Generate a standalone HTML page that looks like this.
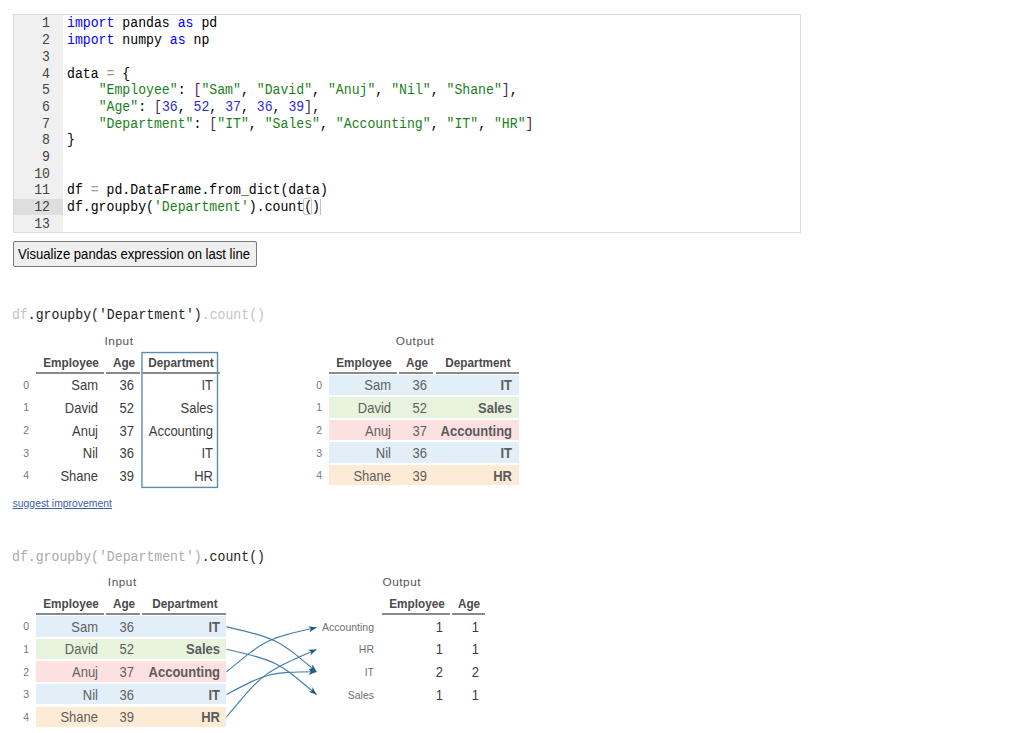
<!DOCTYPE html>
<html><head><meta charset="utf-8"><title>Pandas Tutor</title>
<style>html,body{margin:0;padding:0;background:#fff}body{position:relative;width:1028px;height:733px;overflow:hidden}</style>
</head><body>
<div style="position:absolute;left:13.00px;top:14.00px;width:788.00px;height:219.00px;box-sizing:border-box;border:1px solid #dcdcdc;background:#fff"></div>
<div style="position:absolute;left:14.00px;top:15.00px;width:49.00px;height:217.00px;background:#f0f0f0"></div>
<div style="position:absolute;left:14.00px;top:198.70px;width:49.00px;height:16.70px;background:#dedede"></div>
<div style="position:absolute;left:-350.20px;width:400px;text-align:right;top:11.45px;line-height:24px;font-family:'Liberation Mono', monospace;font-size:14.104px;font-weight:400;color:#444;white-space:pre;transform:scaleX(0.9346);transform-origin:right;">1</div>
<div style="position:absolute;left:66.50px;top:11.45px;line-height:24px;font-family:'Liberation Mono', monospace;font-size:14.104px;font-weight:400;color:#000;white-space:pre;transform:scaleX(0.9346);transform-origin:left;"><span style="color:#0000ff">import</span><span style="color:#000"> pandas </span><span style="color:#0000ff">as</span><span style="color:#000"> pd</span></div>
<div style="position:absolute;left:-350.20px;width:400px;text-align:right;top:28.15px;line-height:24px;font-family:'Liberation Mono', monospace;font-size:14.104px;font-weight:400;color:#444;white-space:pre;transform:scaleX(0.9346);transform-origin:right;">2</div>
<div style="position:absolute;left:66.50px;top:28.15px;line-height:24px;font-family:'Liberation Mono', monospace;font-size:14.104px;font-weight:400;color:#000;white-space:pre;transform:scaleX(0.9346);transform-origin:left;"><span style="color:#0000ff">import</span><span style="color:#000"> numpy </span><span style="color:#0000ff">as</span><span style="color:#000"> np</span></div>
<div style="position:absolute;left:-350.20px;width:400px;text-align:right;top:44.85px;line-height:24px;font-family:'Liberation Mono', monospace;font-size:14.104px;font-weight:400;color:#444;white-space:pre;transform:scaleX(0.9346);transform-origin:right;">3</div>
<div style="position:absolute;left:-350.20px;width:400px;text-align:right;top:61.55px;line-height:24px;font-family:'Liberation Mono', monospace;font-size:14.104px;font-weight:400;color:#444;white-space:pre;transform:scaleX(0.9346);transform-origin:right;">4</div>
<div style="position:absolute;left:66.50px;top:61.55px;line-height:24px;font-family:'Liberation Mono', monospace;font-size:14.104px;font-weight:400;color:#000;white-space:pre;transform:scaleX(0.9346);transform-origin:left;"><span style="color:#000">data </span><span style="color:#999">=</span><span style="color:#000"> {</span></div>
<div style="position:absolute;left:-350.20px;width:400px;text-align:right;top:78.25px;line-height:24px;font-family:'Liberation Mono', monospace;font-size:14.104px;font-weight:400;color:#444;white-space:pre;transform:scaleX(0.9346);transform-origin:right;">5</div>
<div style="position:absolute;left:66.50px;top:78.25px;line-height:24px;font-family:'Liberation Mono', monospace;font-size:14.104px;font-weight:400;color:#000;white-space:pre;transform:scaleX(0.9346);transform-origin:left;"><span style="color:#000">    </span><span style="color:#1a7f1a">"Employee"</span><span style="color:#000">: </span><span style="color:#4b1f4b">[</span><span style="color:#1a7f1a">"Sam"</span><span style="color:#000">, </span><span style="color:#1a7f1a">"David"</span><span style="color:#000">, </span><span style="color:#1a7f1a">"Anuj"</span><span style="color:#000">, </span><span style="color:#1a7f1a">"Nil"</span><span style="color:#000">, </span><span style="color:#1a7f1a">"Shane"</span><span style="color:#4b1f4b">]</span><span style="color:#000">,</span></div>
<div style="position:absolute;left:-350.20px;width:400px;text-align:right;top:94.95px;line-height:24px;font-family:'Liberation Mono', monospace;font-size:14.104px;font-weight:400;color:#444;white-space:pre;transform:scaleX(0.9346);transform-origin:right;">6</div>
<div style="position:absolute;left:66.50px;top:94.95px;line-height:24px;font-family:'Liberation Mono', monospace;font-size:14.104px;font-weight:400;color:#000;white-space:pre;transform:scaleX(0.9346);transform-origin:left;"><span style="color:#000">    </span><span style="color:#1a7f1a">"Age"</span><span style="color:#000">: </span><span style="color:#4b1f4b">[</span><span style="color:#2b2bd6">36</span><span style="color:#000">, </span><span style="color:#2b2bd6">52</span><span style="color:#000">, </span><span style="color:#2b2bd6">37</span><span style="color:#000">, </span><span style="color:#2b2bd6">36</span><span style="color:#000">, </span><span style="color:#2b2bd6">39</span><span style="color:#4b1f4b">]</span><span style="color:#000">,</span></div>
<div style="position:absolute;left:-350.20px;width:400px;text-align:right;top:111.65px;line-height:24px;font-family:'Liberation Mono', monospace;font-size:14.104px;font-weight:400;color:#444;white-space:pre;transform:scaleX(0.9346);transform-origin:right;">7</div>
<div style="position:absolute;left:66.50px;top:111.65px;line-height:24px;font-family:'Liberation Mono', monospace;font-size:14.104px;font-weight:400;color:#000;white-space:pre;transform:scaleX(0.9346);transform-origin:left;"><span style="color:#000">    </span><span style="color:#1a7f1a">"Department"</span><span style="color:#000">: </span><span style="color:#4b1f4b">[</span><span style="color:#1a7f1a">"IT"</span><span style="color:#000">, </span><span style="color:#1a7f1a">"Sales"</span><span style="color:#000">, </span><span style="color:#1a7f1a">"Accounting"</span><span style="color:#000">, </span><span style="color:#1a7f1a">"IT"</span><span style="color:#000">, </span><span style="color:#1a7f1a">"HR"</span><span style="color:#4b1f4b">]</span></div>
<div style="position:absolute;left:-350.20px;width:400px;text-align:right;top:128.35px;line-height:24px;font-family:'Liberation Mono', monospace;font-size:14.104px;font-weight:400;color:#444;white-space:pre;transform:scaleX(0.9346);transform-origin:right;">8</div>
<div style="position:absolute;left:66.50px;top:128.35px;line-height:24px;font-family:'Liberation Mono', monospace;font-size:14.104px;font-weight:400;color:#000;white-space:pre;transform:scaleX(0.9346);transform-origin:left;"><span style="color:#000">}</span></div>
<div style="position:absolute;left:-350.20px;width:400px;text-align:right;top:145.05px;line-height:24px;font-family:'Liberation Mono', monospace;font-size:14.104px;font-weight:400;color:#444;white-space:pre;transform:scaleX(0.9346);transform-origin:right;">9</div>
<div style="position:absolute;left:-350.20px;width:400px;text-align:right;top:161.75px;line-height:24px;font-family:'Liberation Mono', monospace;font-size:14.104px;font-weight:400;color:#444;white-space:pre;transform:scaleX(0.9346);transform-origin:right;">10</div>
<div style="position:absolute;left:-350.20px;width:400px;text-align:right;top:178.45px;line-height:24px;font-family:'Liberation Mono', monospace;font-size:14.104px;font-weight:400;color:#444;white-space:pre;transform:scaleX(0.9346);transform-origin:right;">11</div>
<div style="position:absolute;left:66.50px;top:178.45px;line-height:24px;font-family:'Liberation Mono', monospace;font-size:14.104px;font-weight:400;color:#000;white-space:pre;transform:scaleX(0.9346);transform-origin:left;"><span style="color:#000">df </span><span style="color:#999">=</span><span style="color:#000"> pd.DataFrame.from_dict(data)</span></div>
<div style="position:absolute;left:-350.20px;width:400px;text-align:right;top:195.15px;line-height:24px;font-family:'Liberation Mono', monospace;font-size:14.104px;font-weight:400;color:#444;white-space:pre;transform:scaleX(0.9346);transform-origin:right;">12</div>
<div style="position:absolute;left:66.50px;top:195.15px;line-height:24px;font-family:'Liberation Mono', monospace;font-size:14.104px;font-weight:400;color:#000;white-space:pre;transform:scaleX(0.9346);transform-origin:left;"><span style="color:#000">df.groupby(</span><span style="color:#1a7f1a">'Department'</span><span style="color:#000">).count()</span></div>
<div style="position:absolute;left:-350.20px;width:400px;text-align:right;top:211.85px;line-height:24px;font-family:'Liberation Mono', monospace;font-size:14.104px;font-weight:400;color:#444;white-space:pre;transform:scaleX(0.9346);transform-origin:right;">13</div>
<div style="position:absolute;left:303.40px;top:197.60px;width:8.70px;height:17.50px;box-sizing:border-box;border:1px solid #c8c8c8;border-radius:2px"></div>
<div style="position:absolute;left:320.00px;top:199.00px;width:1.00px;height:16.00px;background:#c0c0c0"></div>
<div style="position:absolute;left:13.00px;top:241.00px;width:244.00px;height:26.00px;box-sizing:border-box;border:1px solid #7a7a7a;border-radius:2px;background:#efefef"></div>
<div style="position:absolute;left:18.00px;top:242.01px;line-height:24px;font-family:'Liberation Sans', sans-serif;font-size:14.410px;font-weight:400;color:#000;white-space:pre;transform:scaleX(0.9091);transform-origin:left;">Visualize pandas expression on last line</div>
<div style="position:absolute;left:12.40px;top:303.25px;line-height:24px;font-family:'Liberation Mono', monospace;font-size:14.104px;font-weight:400;color:#000;white-space:pre;transform:scaleX(0.9346);transform-origin:left;"><span style="color:#c4c4c4">df</span><span style="color:#222">.groupby('Department')</span><span style="color:#c4c4c4">.count()</span></div>
<div style="position:absolute;left:12.40px;top:545.10px;line-height:24px;font-family:'Liberation Mono', monospace;font-size:14.104px;font-weight:400;color:#000;white-space:pre;transform:scaleX(0.9346);transform-origin:left;"><span style="color:#aaaaaa">df.groupby('Department')</span><span style="color:#222">.count()</span></div>
<div style="position:absolute;left:-81.00px;width:400px;text-align:center;top:328.81px;line-height:24px;font-family:'Liberation Sans', sans-serif;font-size:11.800px;font-weight:400;color:#555;white-space:pre;letter-spacing:0.55px;">Input</div>
<div style="position:absolute;left:36.30px;top:372.10px;width:67.70px;height:1.50px;background:#8a8a8a"></div>
<div style="position:absolute;left:-129.25px;width:400px;text-align:center;top:350.84px;line-height:24px;font-family:'Liberation Sans', sans-serif;font-size:13.160px;font-weight:700;color:#4a4a4a;white-space:pre;transform:scaleX(0.8929);transform-origin:center;">Employee</div>
<div style="position:absolute;left:106.30px;top:372.10px;width:33.90px;height:1.50px;background:#8a8a8a"></div>
<div style="position:absolute;left:-76.15px;width:400px;text-align:center;top:350.84px;line-height:24px;font-family:'Liberation Sans', sans-serif;font-size:13.160px;font-weight:700;color:#4a4a4a;white-space:pre;transform:scaleX(0.8929);transform-origin:center;">Age</div>
<div style="position:absolute;left:142.00px;top:372.10px;width:77.50px;height:1.50px;background:#8a8a8a"></div>
<div style="position:absolute;left:-18.65px;width:400px;text-align:center;top:350.84px;line-height:24px;font-family:'Liberation Sans', sans-serif;font-size:13.160px;font-weight:700;color:#4a4a4a;white-space:pre;transform:scaleX(0.8929);transform-origin:center;">Department</div>
<div style="position:absolute;left:-371.20px;width:400px;text-align:right;top:372.90px;line-height:24px;font-family:'Liberation Sans', sans-serif;font-size:11.550px;font-weight:400;color:#777;white-space:pre;transform:scaleX(0.9091);transform-origin:right;">0</div>
<div style="position:absolute;left:-302.30px;width:400px;text-align:right;top:373.49px;line-height:24px;font-family:'Liberation Sans', sans-serif;font-size:14.170px;font-weight:400;color:#3c3c3c;white-space:pre;transform:scaleX(0.9174);transform-origin:right;">Sam</div>
<div style="position:absolute;left:-266.10px;width:400px;text-align:right;top:373.49px;line-height:24px;font-family:'Liberation Sans', sans-serif;font-size:14.170px;font-weight:400;color:#3c3c3c;white-space:pre;transform:scaleX(0.9174);transform-origin:right;">36</div>
<div style="position:absolute;left:-186.80px;width:400px;text-align:right;top:373.49px;line-height:24px;font-family:'Liberation Sans', sans-serif;font-size:14.170px;font-weight:400;color:#3c3c3c;white-space:pre;transform:scaleX(0.9174);transform-origin:right;">IT</div>
<div style="position:absolute;left:-371.20px;width:400px;text-align:right;top:395.45px;line-height:24px;font-family:'Liberation Sans', sans-serif;font-size:11.550px;font-weight:400;color:#777;white-space:pre;transform:scaleX(0.9091);transform-origin:right;">1</div>
<div style="position:absolute;left:-302.30px;width:400px;text-align:right;top:396.04px;line-height:24px;font-family:'Liberation Sans', sans-serif;font-size:14.170px;font-weight:400;color:#3c3c3c;white-space:pre;transform:scaleX(0.9174);transform-origin:right;">David</div>
<div style="position:absolute;left:-266.10px;width:400px;text-align:right;top:396.04px;line-height:24px;font-family:'Liberation Sans', sans-serif;font-size:14.170px;font-weight:400;color:#3c3c3c;white-space:pre;transform:scaleX(0.9174);transform-origin:right;">52</div>
<div style="position:absolute;left:-186.80px;width:400px;text-align:right;top:396.04px;line-height:24px;font-family:'Liberation Sans', sans-serif;font-size:14.170px;font-weight:400;color:#3c3c3c;white-space:pre;transform:scaleX(0.9174);transform-origin:right;">Sales</div>
<div style="position:absolute;left:-371.20px;width:400px;text-align:right;top:418.00px;line-height:24px;font-family:'Liberation Sans', sans-serif;font-size:11.550px;font-weight:400;color:#777;white-space:pre;transform:scaleX(0.9091);transform-origin:right;">2</div>
<div style="position:absolute;left:-302.30px;width:400px;text-align:right;top:418.59px;line-height:24px;font-family:'Liberation Sans', sans-serif;font-size:14.170px;font-weight:400;color:#3c3c3c;white-space:pre;transform:scaleX(0.9174);transform-origin:right;">Anuj</div>
<div style="position:absolute;left:-266.10px;width:400px;text-align:right;top:418.59px;line-height:24px;font-family:'Liberation Sans', sans-serif;font-size:14.170px;font-weight:400;color:#3c3c3c;white-space:pre;transform:scaleX(0.9174);transform-origin:right;">37</div>
<div style="position:absolute;left:-186.80px;width:400px;text-align:right;top:418.59px;line-height:24px;font-family:'Liberation Sans', sans-serif;font-size:14.170px;font-weight:400;color:#3c3c3c;white-space:pre;transform:scaleX(0.9174);transform-origin:right;">Accounting</div>
<div style="position:absolute;left:-371.20px;width:400px;text-align:right;top:440.55px;line-height:24px;font-family:'Liberation Sans', sans-serif;font-size:11.550px;font-weight:400;color:#777;white-space:pre;transform:scaleX(0.9091);transform-origin:right;">3</div>
<div style="position:absolute;left:-302.30px;width:400px;text-align:right;top:441.14px;line-height:24px;font-family:'Liberation Sans', sans-serif;font-size:14.170px;font-weight:400;color:#3c3c3c;white-space:pre;transform:scaleX(0.9174);transform-origin:right;">Nil</div>
<div style="position:absolute;left:-266.10px;width:400px;text-align:right;top:441.14px;line-height:24px;font-family:'Liberation Sans', sans-serif;font-size:14.170px;font-weight:400;color:#3c3c3c;white-space:pre;transform:scaleX(0.9174);transform-origin:right;">36</div>
<div style="position:absolute;left:-186.80px;width:400px;text-align:right;top:441.14px;line-height:24px;font-family:'Liberation Sans', sans-serif;font-size:14.170px;font-weight:400;color:#3c3c3c;white-space:pre;transform:scaleX(0.9174);transform-origin:right;">IT</div>
<div style="position:absolute;left:-371.20px;width:400px;text-align:right;top:463.10px;line-height:24px;font-family:'Liberation Sans', sans-serif;font-size:11.550px;font-weight:400;color:#777;white-space:pre;transform:scaleX(0.9091);transform-origin:right;">4</div>
<div style="position:absolute;left:-302.30px;width:400px;text-align:right;top:463.69px;line-height:24px;font-family:'Liberation Sans', sans-serif;font-size:14.170px;font-weight:400;color:#3c3c3c;white-space:pre;transform:scaleX(0.9174);transform-origin:right;">Shane</div>
<div style="position:absolute;left:-266.10px;width:400px;text-align:right;top:463.69px;line-height:24px;font-family:'Liberation Sans', sans-serif;font-size:14.170px;font-weight:400;color:#3c3c3c;white-space:pre;transform:scaleX(0.9174);transform-origin:right;">39</div>
<div style="position:absolute;left:-186.80px;width:400px;text-align:right;top:463.69px;line-height:24px;font-family:'Liberation Sans', sans-serif;font-size:14.170px;font-weight:400;color:#3c3c3c;white-space:pre;transform:scaleX(0.9174);transform-origin:right;">HR</div>
<svg style="position:absolute;left:0;top:0" width="1028" height="733"><rect x="141.95" y="352.55" width="75.55" height="134.85" fill="none" stroke="#5a8db4" stroke-width="1.4"/></svg>
<div style="position:absolute;left:215.10px;width:400px;text-align:center;top:328.81px;line-height:24px;font-family:'Liberation Sans', sans-serif;font-size:11.800px;font-weight:400;color:#555;white-space:pre;letter-spacing:0.55px;">Output</div>
<div style="position:absolute;left:329.20px;top:372.10px;width:67.70px;height:1.50px;background:#8a8a8a"></div>
<div style="position:absolute;left:163.65px;width:400px;text-align:center;top:350.84px;line-height:24px;font-family:'Liberation Sans', sans-serif;font-size:13.160px;font-weight:700;color:#4a4a4a;white-space:pre;transform:scaleX(0.8929);transform-origin:center;">Employee</div>
<div style="position:absolute;left:399.30px;top:372.10px;width:34.00px;height:1.50px;background:#8a8a8a"></div>
<div style="position:absolute;left:216.90px;width:400px;text-align:center;top:350.84px;line-height:24px;font-family:'Liberation Sans', sans-serif;font-size:13.160px;font-weight:700;color:#4a4a4a;white-space:pre;transform:scaleX(0.8929);transform-origin:center;">Age</div>
<div style="position:absolute;left:435.60px;top:372.10px;width:83.10px;height:1.50px;background:#8a8a8a"></div>
<div style="position:absolute;left:277.75px;width:400px;text-align:center;top:350.84px;line-height:24px;font-family:'Liberation Sans', sans-serif;font-size:13.160px;font-weight:700;color:#4a4a4a;white-space:pre;transform:scaleX(0.8929);transform-origin:center;">Department</div>
<div style="position:absolute;left:329.20px;top:374.70px;width:189.50px;height:20.50px;background:#e2eef8"></div>
<div style="position:absolute;left:-78.00px;width:400px;text-align:right;top:372.90px;line-height:24px;font-family:'Liberation Sans', sans-serif;font-size:11.550px;font-weight:400;color:#777;white-space:pre;transform:scaleX(0.9091);transform-origin:right;">0</div>
<div style="position:absolute;left:-9.40px;width:400px;text-align:right;top:373.49px;line-height:24px;font-family:'Liberation Sans', sans-serif;font-size:14.170px;font-weight:400;color:#606060;white-space:pre;transform:scaleX(0.9174);transform-origin:right;">Sam</div>
<div style="position:absolute;left:27.00px;width:400px;text-align:right;top:373.49px;line-height:24px;font-family:'Liberation Sans', sans-serif;font-size:14.170px;font-weight:400;color:#606060;white-space:pre;transform:scaleX(0.9174);transform-origin:right;">36</div>
<div style="position:absolute;left:112.40px;width:400px;text-align:right;top:373.49px;line-height:24px;font-family:'Liberation Sans', sans-serif;font-size:14.170px;font-weight:700;color:#5c5c5c;white-space:pre;transform:scaleX(0.9174);transform-origin:right;">IT</div>
<div style="position:absolute;left:329.20px;top:397.25px;width:189.50px;height:20.50px;background:#e7f3dc"></div>
<div style="position:absolute;left:-78.00px;width:400px;text-align:right;top:395.45px;line-height:24px;font-family:'Liberation Sans', sans-serif;font-size:11.550px;font-weight:400;color:#777;white-space:pre;transform:scaleX(0.9091);transform-origin:right;">1</div>
<div style="position:absolute;left:-9.40px;width:400px;text-align:right;top:396.04px;line-height:24px;font-family:'Liberation Sans', sans-serif;font-size:14.170px;font-weight:400;color:#606060;white-space:pre;transform:scaleX(0.9174);transform-origin:right;">David</div>
<div style="position:absolute;left:27.00px;width:400px;text-align:right;top:396.04px;line-height:24px;font-family:'Liberation Sans', sans-serif;font-size:14.170px;font-weight:400;color:#606060;white-space:pre;transform:scaleX(0.9174);transform-origin:right;">52</div>
<div style="position:absolute;left:112.40px;width:400px;text-align:right;top:396.04px;line-height:24px;font-family:'Liberation Sans', sans-serif;font-size:14.170px;font-weight:700;color:#5c5c5c;white-space:pre;transform:scaleX(0.9174);transform-origin:right;">Sales</div>
<div style="position:absolute;left:329.20px;top:419.80px;width:189.50px;height:20.50px;background:#fde1e1"></div>
<div style="position:absolute;left:-78.00px;width:400px;text-align:right;top:418.00px;line-height:24px;font-family:'Liberation Sans', sans-serif;font-size:11.550px;font-weight:400;color:#777;white-space:pre;transform:scaleX(0.9091);transform-origin:right;">2</div>
<div style="position:absolute;left:-9.40px;width:400px;text-align:right;top:418.59px;line-height:24px;font-family:'Liberation Sans', sans-serif;font-size:14.170px;font-weight:400;color:#606060;white-space:pre;transform:scaleX(0.9174);transform-origin:right;">Anuj</div>
<div style="position:absolute;left:27.00px;width:400px;text-align:right;top:418.59px;line-height:24px;font-family:'Liberation Sans', sans-serif;font-size:14.170px;font-weight:400;color:#606060;white-space:pre;transform:scaleX(0.9174);transform-origin:right;">37</div>
<div style="position:absolute;left:112.40px;width:400px;text-align:right;top:418.59px;line-height:24px;font-family:'Liberation Sans', sans-serif;font-size:14.170px;font-weight:700;color:#5c5c5c;white-space:pre;transform:scaleX(0.9174);transform-origin:right;">Accounting</div>
<div style="position:absolute;left:329.20px;top:442.35px;width:189.50px;height:20.50px;background:#e2eef8"></div>
<div style="position:absolute;left:-78.00px;width:400px;text-align:right;top:440.55px;line-height:24px;font-family:'Liberation Sans', sans-serif;font-size:11.550px;font-weight:400;color:#777;white-space:pre;transform:scaleX(0.9091);transform-origin:right;">3</div>
<div style="position:absolute;left:-9.40px;width:400px;text-align:right;top:441.14px;line-height:24px;font-family:'Liberation Sans', sans-serif;font-size:14.170px;font-weight:400;color:#606060;white-space:pre;transform:scaleX(0.9174);transform-origin:right;">Nil</div>
<div style="position:absolute;left:27.00px;width:400px;text-align:right;top:441.14px;line-height:24px;font-family:'Liberation Sans', sans-serif;font-size:14.170px;font-weight:400;color:#606060;white-space:pre;transform:scaleX(0.9174);transform-origin:right;">36</div>
<div style="position:absolute;left:112.40px;width:400px;text-align:right;top:441.14px;line-height:24px;font-family:'Liberation Sans', sans-serif;font-size:14.170px;font-weight:700;color:#5c5c5c;white-space:pre;transform:scaleX(0.9174);transform-origin:right;">IT</div>
<div style="position:absolute;left:329.20px;top:464.90px;width:189.50px;height:20.50px;background:#fdebd6"></div>
<div style="position:absolute;left:-78.00px;width:400px;text-align:right;top:463.10px;line-height:24px;font-family:'Liberation Sans', sans-serif;font-size:11.550px;font-weight:400;color:#777;white-space:pre;transform:scaleX(0.9091);transform-origin:right;">4</div>
<div style="position:absolute;left:-9.40px;width:400px;text-align:right;top:463.69px;line-height:24px;font-family:'Liberation Sans', sans-serif;font-size:14.170px;font-weight:400;color:#606060;white-space:pre;transform:scaleX(0.9174);transform-origin:right;">Shane</div>
<div style="position:absolute;left:27.00px;width:400px;text-align:right;top:463.69px;line-height:24px;font-family:'Liberation Sans', sans-serif;font-size:14.170px;font-weight:400;color:#606060;white-space:pre;transform:scaleX(0.9174);transform-origin:right;">39</div>
<div style="position:absolute;left:112.40px;width:400px;text-align:right;top:463.69px;line-height:24px;font-family:'Liberation Sans', sans-serif;font-size:14.170px;font-weight:700;color:#5c5c5c;white-space:pre;transform:scaleX(0.9174);transform-origin:right;">HR</div>
<div style="position:absolute;left:12.60px;top:491.85px;line-height:24px;font-family:'Liberation Sans', sans-serif;font-size:10.400px;font-weight:400;color:#4060aa;white-space:pre;text-decoration:underline;text-underline-offset:0.9px;">suggest improvement</div>
<div style="position:absolute;left:-77.70px;width:400px;text-align:center;top:570.11px;line-height:24px;font-family:'Liberation Sans', sans-serif;font-size:11.800px;font-weight:400;color:#555;white-space:pre;letter-spacing:0.55px;">Input</div>
<div style="position:absolute;left:36.30px;top:613.40px;width:67.70px;height:1.50px;background:#8a8a8a"></div>
<div style="position:absolute;left:-129.25px;width:400px;text-align:center;top:592.14px;line-height:24px;font-family:'Liberation Sans', sans-serif;font-size:13.160px;font-weight:700;color:#4a4a4a;white-space:pre;transform:scaleX(0.8929);transform-origin:center;">Employee</div>
<div style="position:absolute;left:106.20px;top:613.40px;width:34.30px;height:1.50px;background:#8a8a8a"></div>
<div style="position:absolute;left:-76.05px;width:400px;text-align:center;top:592.14px;line-height:24px;font-family:'Liberation Sans', sans-serif;font-size:13.160px;font-weight:700;color:#4a4a4a;white-space:pre;transform:scaleX(0.8929);transform-origin:center;">Age</div>
<div style="position:absolute;left:142.20px;top:613.40px;width:83.90px;height:1.50px;background:#8a8a8a"></div>
<div style="position:absolute;left:-15.25px;width:400px;text-align:center;top:592.14px;line-height:24px;font-family:'Liberation Sans', sans-serif;font-size:13.160px;font-weight:700;color:#4a4a4a;white-space:pre;transform:scaleX(0.8929);transform-origin:center;">Department</div>
<div style="position:absolute;left:36.30px;top:616.00px;width:189.80px;height:20.50px;background:#e2eef8"></div>
<div style="position:absolute;left:-371.20px;width:400px;text-align:right;top:614.20px;line-height:24px;font-family:'Liberation Sans', sans-serif;font-size:11.550px;font-weight:400;color:#777;white-space:pre;transform:scaleX(0.9091);transform-origin:right;">0</div>
<div style="position:absolute;left:-302.30px;width:400px;text-align:right;top:614.79px;line-height:24px;font-family:'Liberation Sans', sans-serif;font-size:14.170px;font-weight:400;color:#606060;white-space:pre;transform:scaleX(0.9174);transform-origin:right;">Sam</div>
<div style="position:absolute;left:-265.80px;width:400px;text-align:right;top:614.79px;line-height:24px;font-family:'Liberation Sans', sans-serif;font-size:14.170px;font-weight:400;color:#606060;white-space:pre;transform:scaleX(0.9174);transform-origin:right;">36</div>
<div style="position:absolute;left:-180.20px;width:400px;text-align:right;top:614.79px;line-height:24px;font-family:'Liberation Sans', sans-serif;font-size:14.170px;font-weight:700;color:#5c5c5c;white-space:pre;transform:scaleX(0.9174);transform-origin:right;">IT</div>
<div style="position:absolute;left:36.30px;top:638.65px;width:189.80px;height:20.50px;background:#e7f3dc"></div>
<div style="position:absolute;left:-371.20px;width:400px;text-align:right;top:636.85px;line-height:24px;font-family:'Liberation Sans', sans-serif;font-size:11.550px;font-weight:400;color:#777;white-space:pre;transform:scaleX(0.9091);transform-origin:right;">1</div>
<div style="position:absolute;left:-302.30px;width:400px;text-align:right;top:637.44px;line-height:24px;font-family:'Liberation Sans', sans-serif;font-size:14.170px;font-weight:400;color:#606060;white-space:pre;transform:scaleX(0.9174);transform-origin:right;">David</div>
<div style="position:absolute;left:-265.80px;width:400px;text-align:right;top:637.44px;line-height:24px;font-family:'Liberation Sans', sans-serif;font-size:14.170px;font-weight:400;color:#606060;white-space:pre;transform:scaleX(0.9174);transform-origin:right;">52</div>
<div style="position:absolute;left:-180.20px;width:400px;text-align:right;top:637.44px;line-height:24px;font-family:'Liberation Sans', sans-serif;font-size:14.170px;font-weight:700;color:#5c5c5c;white-space:pre;transform:scaleX(0.9174);transform-origin:right;">Sales</div>
<div style="position:absolute;left:36.30px;top:661.30px;width:189.80px;height:20.50px;background:#fde1e1"></div>
<div style="position:absolute;left:-371.20px;width:400px;text-align:right;top:659.50px;line-height:24px;font-family:'Liberation Sans', sans-serif;font-size:11.550px;font-weight:400;color:#777;white-space:pre;transform:scaleX(0.9091);transform-origin:right;">2</div>
<div style="position:absolute;left:-302.30px;width:400px;text-align:right;top:660.09px;line-height:24px;font-family:'Liberation Sans', sans-serif;font-size:14.170px;font-weight:400;color:#606060;white-space:pre;transform:scaleX(0.9174);transform-origin:right;">Anuj</div>
<div style="position:absolute;left:-265.80px;width:400px;text-align:right;top:660.09px;line-height:24px;font-family:'Liberation Sans', sans-serif;font-size:14.170px;font-weight:400;color:#606060;white-space:pre;transform:scaleX(0.9174);transform-origin:right;">37</div>
<div style="position:absolute;left:-180.20px;width:400px;text-align:right;top:660.09px;line-height:24px;font-family:'Liberation Sans', sans-serif;font-size:14.170px;font-weight:700;color:#5c5c5c;white-space:pre;transform:scaleX(0.9174);transform-origin:right;">Accounting</div>
<div style="position:absolute;left:36.30px;top:683.95px;width:189.80px;height:20.50px;background:#e2eef8"></div>
<div style="position:absolute;left:-371.20px;width:400px;text-align:right;top:682.15px;line-height:24px;font-family:'Liberation Sans', sans-serif;font-size:11.550px;font-weight:400;color:#777;white-space:pre;transform:scaleX(0.9091);transform-origin:right;">3</div>
<div style="position:absolute;left:-302.30px;width:400px;text-align:right;top:682.74px;line-height:24px;font-family:'Liberation Sans', sans-serif;font-size:14.170px;font-weight:400;color:#606060;white-space:pre;transform:scaleX(0.9174);transform-origin:right;">Nil</div>
<div style="position:absolute;left:-265.80px;width:400px;text-align:right;top:682.74px;line-height:24px;font-family:'Liberation Sans', sans-serif;font-size:14.170px;font-weight:400;color:#606060;white-space:pre;transform:scaleX(0.9174);transform-origin:right;">36</div>
<div style="position:absolute;left:-180.20px;width:400px;text-align:right;top:682.74px;line-height:24px;font-family:'Liberation Sans', sans-serif;font-size:14.170px;font-weight:700;color:#5c5c5c;white-space:pre;transform:scaleX(0.9174);transform-origin:right;">IT</div>
<div style="position:absolute;left:36.30px;top:706.60px;width:189.80px;height:20.50px;background:#fdebd6"></div>
<div style="position:absolute;left:-371.20px;width:400px;text-align:right;top:704.80px;line-height:24px;font-family:'Liberation Sans', sans-serif;font-size:11.550px;font-weight:400;color:#777;white-space:pre;transform:scaleX(0.9091);transform-origin:right;">4</div>
<div style="position:absolute;left:-302.30px;width:400px;text-align:right;top:705.39px;line-height:24px;font-family:'Liberation Sans', sans-serif;font-size:14.170px;font-weight:400;color:#606060;white-space:pre;transform:scaleX(0.9174);transform-origin:right;">Shane</div>
<div style="position:absolute;left:-265.80px;width:400px;text-align:right;top:705.39px;line-height:24px;font-family:'Liberation Sans', sans-serif;font-size:14.170px;font-weight:400;color:#606060;white-space:pre;transform:scaleX(0.9174);transform-origin:right;">39</div>
<div style="position:absolute;left:-180.20px;width:400px;text-align:right;top:705.39px;line-height:24px;font-family:'Liberation Sans', sans-serif;font-size:14.170px;font-weight:700;color:#5c5c5c;white-space:pre;transform:scaleX(0.9174);transform-origin:right;">HR</div>
<div style="position:absolute;left:201.80px;width:400px;text-align:center;top:570.11px;line-height:24px;font-family:'Liberation Sans', sans-serif;font-size:11.800px;font-weight:400;color:#555;white-space:pre;letter-spacing:0.55px;">Output</div>
<div style="position:absolute;left:382.30px;top:613.40px;width:67.40px;height:1.50px;background:#8a8a8a"></div>
<div style="position:absolute;left:216.60px;width:400px;text-align:center;top:592.14px;line-height:24px;font-family:'Liberation Sans', sans-serif;font-size:13.160px;font-weight:700;color:#4a4a4a;white-space:pre;transform:scaleX(0.8929);transform-origin:center;">Employee</div>
<div style="position:absolute;left:452.20px;top:613.40px;width:32.90px;height:1.50px;background:#8a8a8a"></div>
<div style="position:absolute;left:269.25px;width:400px;text-align:center;top:592.14px;line-height:24px;font-family:'Liberation Sans', sans-serif;font-size:13.160px;font-weight:700;color:#4a4a4a;white-space:pre;transform:scaleX(0.8929);transform-origin:center;">Age</div>
<div style="position:absolute;left:-25.90px;width:400px;text-align:right;top:614.80px;line-height:24px;font-family:'Liberation Sans', sans-serif;font-size:11.550px;font-weight:400;color:#707070;white-space:pre;transform:scaleX(0.9091);transform-origin:right;">Accounting</div>
<div style="position:absolute;left:43.40px;width:400px;text-align:right;top:614.79px;line-height:24px;font-family:'Liberation Sans', sans-serif;font-size:14.170px;font-weight:400;color:#3c3c3c;white-space:pre;transform:scaleX(0.9174);transform-origin:right;">1</div>
<div style="position:absolute;left:78.80px;width:400px;text-align:right;top:614.79px;line-height:24px;font-family:'Liberation Sans', sans-serif;font-size:14.170px;font-weight:400;color:#3c3c3c;white-space:pre;transform:scaleX(0.9174);transform-origin:right;">1</div>
<div style="position:absolute;left:-25.90px;width:400px;text-align:right;top:637.45px;line-height:24px;font-family:'Liberation Sans', sans-serif;font-size:11.550px;font-weight:400;color:#707070;white-space:pre;transform:scaleX(0.9091);transform-origin:right;">HR</div>
<div style="position:absolute;left:43.40px;width:400px;text-align:right;top:637.44px;line-height:24px;font-family:'Liberation Sans', sans-serif;font-size:14.170px;font-weight:400;color:#3c3c3c;white-space:pre;transform:scaleX(0.9174);transform-origin:right;">1</div>
<div style="position:absolute;left:78.80px;width:400px;text-align:right;top:637.44px;line-height:24px;font-family:'Liberation Sans', sans-serif;font-size:14.170px;font-weight:400;color:#3c3c3c;white-space:pre;transform:scaleX(0.9174);transform-origin:right;">1</div>
<div style="position:absolute;left:-25.90px;width:400px;text-align:right;top:660.10px;line-height:24px;font-family:'Liberation Sans', sans-serif;font-size:11.550px;font-weight:400;color:#707070;white-space:pre;transform:scaleX(0.9091);transform-origin:right;">IT</div>
<div style="position:absolute;left:43.40px;width:400px;text-align:right;top:660.09px;line-height:24px;font-family:'Liberation Sans', sans-serif;font-size:14.170px;font-weight:400;color:#3c3c3c;white-space:pre;transform:scaleX(0.9174);transform-origin:right;">2</div>
<div style="position:absolute;left:78.80px;width:400px;text-align:right;top:660.09px;line-height:24px;font-family:'Liberation Sans', sans-serif;font-size:14.170px;font-weight:400;color:#3c3c3c;white-space:pre;transform:scaleX(0.9174);transform-origin:right;">2</div>
<div style="position:absolute;left:-25.90px;width:400px;text-align:right;top:682.75px;line-height:24px;font-family:'Liberation Sans', sans-serif;font-size:11.550px;font-weight:400;color:#707070;white-space:pre;transform:scaleX(0.9091);transform-origin:right;">Sales</div>
<div style="position:absolute;left:43.40px;width:400px;text-align:right;top:682.74px;line-height:24px;font-family:'Liberation Sans', sans-serif;font-size:14.170px;font-weight:400;color:#3c3c3c;white-space:pre;transform:scaleX(0.9174);transform-origin:right;">1</div>
<div style="position:absolute;left:78.80px;width:400px;text-align:right;top:682.74px;line-height:24px;font-family:'Liberation Sans', sans-serif;font-size:14.170px;font-weight:400;color:#3c3c3c;white-space:pre;transform:scaleX(0.9174);transform-origin:right;">1</div>
<svg style="position:absolute;left:0;top:0" width="1028" height="733"><defs><marker id="ah" viewBox="0 0 10 10" preserveAspectRatio="none" refX="10" refY="5" markerWidth="8" markerHeight="6.4" markerUnits="userSpaceOnUse" orient="auto"><path d="M0,0 L10,5 L0,10 L3,5 Z" fill="#1b5a86"/></marker></defs><path d="M226.50,626.90 C276.89,638.55 276.89,638.55 316.50,671.80" fill="none" stroke="#3f7fa9" stroke-width="1.15" marker-end="url(#ah)"/><path d="M226.50,649.30 C276.94,661.15 276.94,661.15 316.50,694.60" fill="none" stroke="#3f7fa9" stroke-width="1.15" marker-end="url(#ah)"/><path d="M226.50,671.90 C266.17,638.90 266.17,638.90 316.50,627.50" fill="none" stroke="#3f7fa9" stroke-width="1.15" marker-end="url(#ah)"/><path d="M226.50,694.40 C268.79,672.30 268.79,672.30 316.50,671.80" fill="none" stroke="#3f7fa9" stroke-width="1.15" marker-end="url(#ah)"/><path d="M226.50,717.00 C263.40,672.45 263.40,672.45 316.50,649.50" fill="none" stroke="#3f7fa9" stroke-width="1.15" marker-end="url(#ah)"/></svg>
</body></html>
